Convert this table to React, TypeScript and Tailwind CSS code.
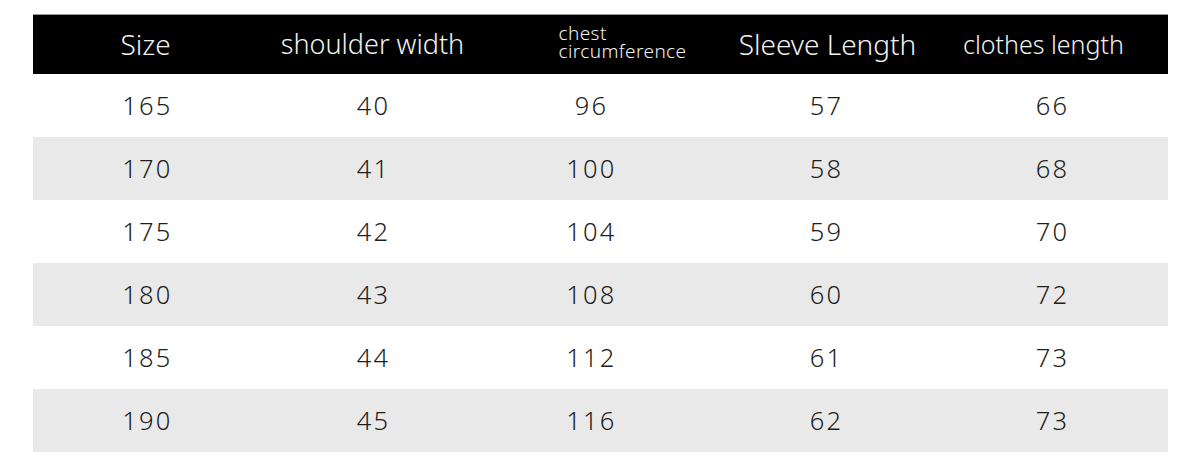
const rows = [
  ["165", "40", "96", "57", "66"],
  ["170", "41", "100", "58", "68"],
  ["175", "42", "104", "59", "70"],
  ["180", "43", "108", "60", "72"],
  ["185", "44", "112", "61", "73"],
  ["190", "45", "116", "62", "73"],
];

const font = { fontFamily: '"Noto Sans", "Noto Sans CJK SC", sans-serif' };

export default function App() {
  return (
    <div className="w-[1200px] h-[460px] bg-white pt-[14px] pl-[33px]" style={font}>
      <div className="w-[1135px]">
        <div className="grid grid-cols-5 h-[60px] bg-black text-[#f2f2f2] items-center border-t border-[#9a9a9a] font-[350]">
          <div className="text-center text-[28px] pr-[2px] pb-[2px]">Size</div>
          <div className="text-center text-[27px] pr-[2px]">shoulder width</div>
          <div className="flex justify-center pl-[44px]">
            <div className="text-[19px] leading-[18px] tracking-[0.4px] pb-[6px]">
              chest
              <br />
              circumference
            </div>
          </div>
          <div className="text-center text-[28px] pb-[2px]">Sleeve Length</div>
          <div className="text-center text-[25px] pr-[22px]">clothes length</div>
        </div>
        {rows.map((r, i) => (
          <div
            key={r[0]}
            className={`grid grid-cols-5 h-[63px] items-center text-[25.5px] font-[350] text-[#1e1e1e] tracking-[2.2px] ${
              i % 2 === 1 ? "bg-[#e9e9e9]" : "bg-white"
            }`}
          >
            <div className="text-center pl-[2px]">{r[0]}</div>
            <div className="text-center">{r[1]}</div>
            <div className="text-center pr-[18px]">{r[2]}</div>
            <div className="text-center pr-[2px]">{r[3]}</div>
            <div className="text-center pr-[4px]">{r[4]}</div>
          </div>
        ))}
      </div>
    </div>
  );
}
